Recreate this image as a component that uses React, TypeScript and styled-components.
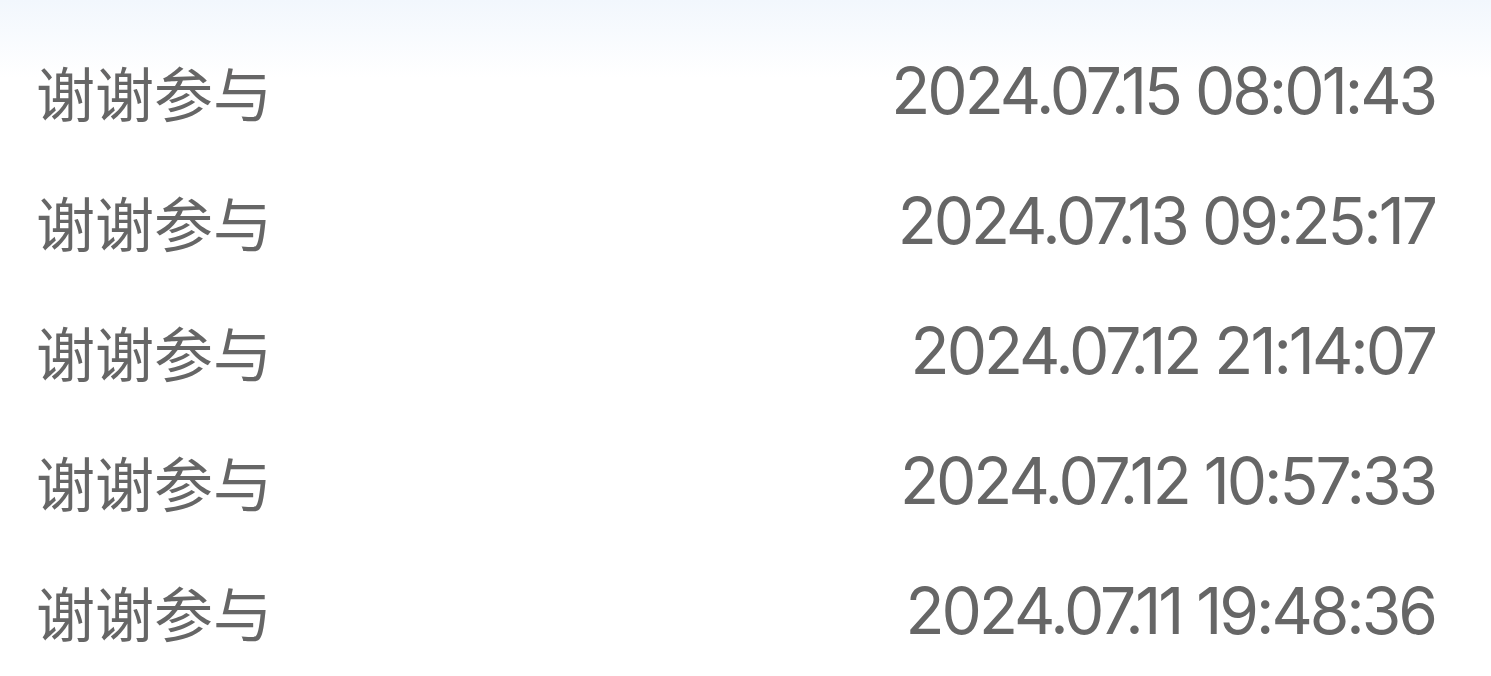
import React from "react";
import styled, { createGlobalStyle } from "styled-components";

const Global = createGlobalStyle`
  html, body { margin: 0; padding: 0; background: #fff; }
  body { font-family: "Noto Sans", "Noto Sans CJK SC", sans-serif; }
`;

const Page = styled.div`
  width: 1491px;
  height: 676px;
  overflow: hidden;
  background: linear-gradient(180deg, #f2f7fd 0px, #ffffff 78px);
  padding: 26px 56px 0 36px;
  box-sizing: border-box;
  display: flex;
  flex-direction: column;
`;

const Row = styled.div`
  height: 130px;
  display: flex;
  align-items: center;
  justify-content: space-between;
  color: #666666;
`;

const Label = styled.span`
  font-family: "Noto Sans CJK SC", sans-serif;
  font-size: 59px;
  line-height: 1;
`;

const Time = styled.span`
  font-family: Inter, "Noto Sans", sans-serif;
  font-size: 64px;
  letter-spacing: -3px;
  line-height: 1;
`;

const records = [
  "2024.07.15 08:01:43",
  "2024.07.13 09:25:17",
  "2024.07.12 21:14:07",
  "2024.07.12 10:57:33",
  "2024.07.11 19:48:36",
];

export default function App() {
  return (
    <>
      <Global />
      <Page>
        {records.map((t) => (
          <Row key={t}>
            <Label>谢谢参与</Label>
            <Time>{t}</Time>
          </Row>
        ))}
      </Page>
    </>
  );
}
